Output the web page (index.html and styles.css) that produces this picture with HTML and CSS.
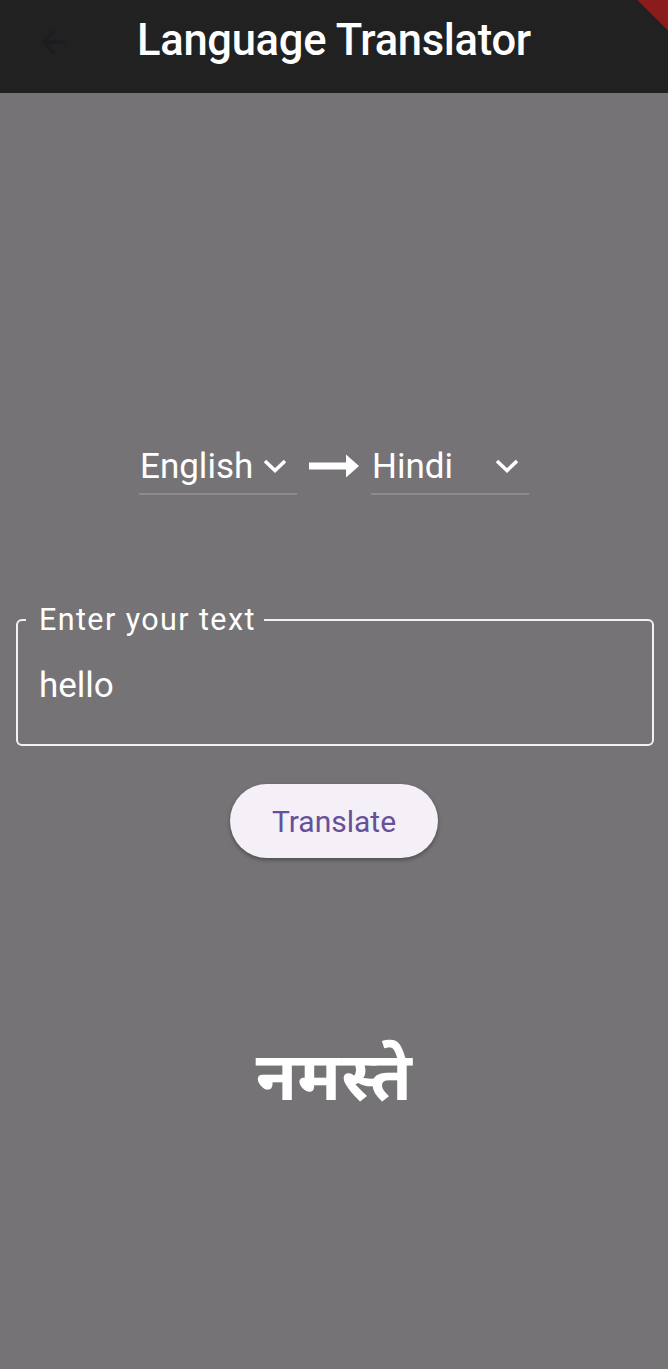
FILE: index.html
```html
<!DOCTYPE html>
<html lang="en">
<head>
<meta charset="utf-8">
<title>Language Translator</title>
<link rel="stylesheet" href="styles.css">
</head>
<body>
<div class="screen">
  <header class="appbar">
    <svg class="back" viewBox="0 0 24 24" width="36" height="36"><path d="M20 11H7.83l5.59-5.59L12 4l-8 8 8 8 1.41-1.41L7.83 13H20v-2z" fill="#1b1b20"/></svg>
    <h1 class="title">Language Translator</h1>
    <div class="banner"></div>
  </header>
  <main class="content">
    <div class="langs">
      <div class="select">
        <span class="sel-text">English</span>
        <svg class="chev" viewBox="0 0 24 14" width="24" height="14"><path d="M2 2 L12 11.5 L22 2" fill="none" stroke="#fff" stroke-width="3.6"/></svg>
      </div>
      <svg class="arrow" viewBox="0 0 50 24" width="50" height="24"><path d="M0 8.5h38v7H0z M37 0.5 L50 12 L37 23.5 Z" fill="#fff"/></svg>
      <div class="select">
        <span class="sel-text">Hindi</span>
        <svg class="chev" viewBox="0 0 24 14" width="24" height="14"><path d="M2 2 L12 11.5 L22 2" fill="none" stroke="#fff" stroke-width="3.6"/></svg>
      </div>
    </div>
    <fieldset class="field">
      <legend class="label">Enter your text</legend>
      <div class="value">hello</div>
    </fieldset>
    <button class="btn">Translate</button>
    <div class="result" lang="hi">नमस्ते</div>
  </main>
</div>
</body>
</html>
```
FILE: styles.css
```css
html, body {
  margin: 0;
  padding: 0;
}
body {
  width: 668px;
  height: 1369px;
  background: #757376;
  font-family: Roboto, "Noto Sans", sans-serif;
  color: #fff;
  overflow: hidden;
}
.screen {
  display: flex;
  flex-direction: column;
  height: 1369px;
}
.appbar {
  position: relative;
  height: 93px;
  background: #212121;
  display: flex;
  align-items: center;
  justify-content: center;
  flex-shrink: 0;
  overflow: hidden;
}
.back {
  position: absolute;
  left: 35px;
  top: 24px;
}
.title {
  margin: 0;
  font-size: 43.5px;
  font-weight: 500;
  letter-spacing: -0.3px;
  color: #fff;
  margin-top: -12px;
}
.banner {
  position: absolute;
  right: -40px;
  top: -6px;
  width: 100px;
  height: 22px;
  background: #8b1c1c;
  transform: rotate(45deg);
}
.content {
  display: flex;
  flex-direction: column;
  align-items: center;
  padding: 0 15px;
}
.langs {
  margin-top: 346px;
  display: flex;
  align-items: center;
  gap: 12px;
}
.select {
  width: 158px;
  height: 56px;
  display: flex;
  align-items: center;
  justify-content: space-between;
  border-bottom: 2px solid #8c8a8d;
  box-sizing: border-box;
  padding-right: 10px;
}
.sel-text {
  font-size: 35px;
  padding-left: 1px;
}
.arrow {
  margin-top: -3px;
}
.field {
  margin: 108px 0 0 1px;
  width: 638px;
  height: 143px;
  box-sizing: border-box;
  border: 2px solid #f2f2f2;
  border-radius: 6px;
  padding: 0 0 0 8px;
  align-self: flex-start;
}
.label {
  font-size: 30.5px;
  letter-spacing: 1.4px;
  padding: 0 8px 0 13px;
  line-height: 34px;
}
.value {
  font-size: 35px;
  margin: 28px 0 0 13px;
}
.btn {
  margin-top: 38px;
  width: 208px;
  height: 74px;
  border: none;
  border-radius: 37px;
  background: #f5eff7;
  color: #65509a;
  font-family: Roboto, sans-serif;
  font-size: 30px;
  box-shadow: 0 2px 4px rgba(0,0,0,0.35);
}
.result {
  margin-top: 182px;
  font-family: "Noto Sans Devanagari", "Noto Sans", "Lohit Devanagari", sans-serif;
  font-weight: 700;
  font-size: 67px;
  letter-spacing: 0.5px;
}
```
